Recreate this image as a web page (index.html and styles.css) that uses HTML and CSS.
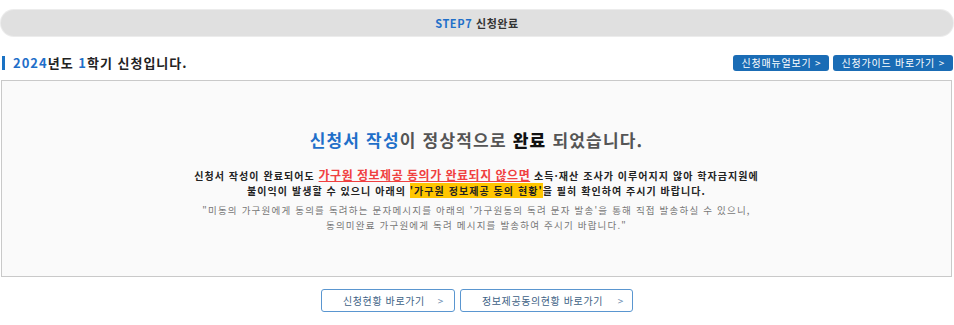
FILE: index.html
```
<!DOCTYPE html>
<html lang="ko">
<head>
  <meta charset="UTF-8" />
  <meta name="viewport" content="width=device-width, initial-scale=1.0">
  <title>신청완료</title>
  <link rel="stylesheet" href="styles.css">
</head>
<body>
  <div class="container">
    <div class="step-bar"><span class="step-no">STEP7</span> 신청완료</div>

    <div class="title-row">
      <h2 class="page-title"><span class="blue">2024</span>년도 <span class="blue">1</span>학기 신청입니다.</h2>
      <div class="top-buttons">
        <button class="blue-button">신청매뉴얼보기 &gt;</button>
        <button class="blue-button">신청가이드 바로가기 &gt;</button>
      </div>
    </div>

    <div class="result-box">
      <h3 class="result-title"><span class="blue">신청서 작성</span>이 정상적으로 <strong>완료</strong> 되었습니다.</h3>
      <p class="notice">
        신청서 작성이 완료되어도 <span class="warn">가구원 정보제공 동의가 완료되지 않으면</span> 소득·재산 조사가 이루어지지 않아 학자금지원에<br>
        불이익이 발생할 수 있으니 아래의 <span class="mark">'가구원 정보제공 동의 현황'</span>을 필히 확인하여 주시기 바랍니다.
      </p>
      <p class="sub-notice">
        "미동의 가구원에게 동의를 독려하는 문자메시지를 아래의 '가구원동의 독려 문자 발송'을 통해 직접 발송하실 수 있으니,<br>
        동의미완료 가구원에게 독려 메시지를 발송하여 주시기 바랍니다."
      </p>
    </div>

    <div class="bottom-buttons">
      <button class="line-button small">신청현황 바로가기 <span class="arrow">&gt;</span></button>
      <button class="line-button large">정보제공동의현황 바로가기 <span class="arrow">&gt;</span></button>
    </div>
  </div>
</body>
</html>
```

FILE: styles.css
```
body {
  margin: 0;
  background: #fff;
  font-family: "Noto Sans CJK KR", "Noto Sans", sans-serif;
  color: #222;
}
.container {
  width: 954px;
  padding-top: 10px;
}
.blue {
  color: #1f6fc9;
}
.step-bar {
  margin: 0 1px 0 1px;
  height: 26px;
  line-height: 26px;
  border-radius: 13px;
  background: #e0e0e0;
  text-align: center;
  font-size: 11px;
  font-weight: bold;
  letter-spacing: 0.6px;
  color: #333;
  box-shadow: 0 0 0 1px #ececec;
}
.step-no {
  color: #1f6fc9;
}
.title-row {
  display: flex;
  justify-content: space-between;
  align-items: center;
  margin-top: 19px;
  height: 16px;
  padding-right: 1px;
}
.page-title {
  margin: 0;
  margin-left: 2px;
  padding-left: 8px;
  border-left: 3px solid #1a72c4;
  font-size: 13px;
  line-height: 14px;
  letter-spacing: 1px;
  color: #222;
}
.top-buttons {
  display: flex;
  gap: 4px;
}
.blue-button {
  height: 16px;
  padding: 0 8px;
  background-color: #1a6cb5;
  color: white;
  border: none;
  border-radius: 3px;
  font-family: inherit;
  font-size: 10px;
  line-height: 16px;
  letter-spacing: 0.8px;
  cursor: pointer;
}
.result-box {
  margin: 9px 2px 0 1px;
  height: 195px;
  background: #fafafa;
  border: 1px solid #c9c9c9;
  text-align: center;
}
.result-title {
  margin: 47px 0 0;
  font-size: 17px;
  line-height: 24px;
  letter-spacing: 1.2px;
  color: #555;
}
.result-title strong {
  color: #111;
}
.notice {
  margin: 15px 0 0;
  font-size: 10px;
  font-weight: bold;
  line-height: 15px;
  letter-spacing: 1.05px;
  color: #222;
}
.warn {
  color: #f04040;
  font-size: 12px;
  text-decoration: underline;
  letter-spacing: 0.5px;
}
.mark {
  background: #ffc600;
}
.sub-notice {
  margin: 5px 0 0;
  font-size: 9.5px;
  line-height: 15px;
  letter-spacing: 1.2px;
  color: #777;
}
.bottom-buttons {
  display: flex;
  justify-content: center;
  gap: 5px;
  margin-top: 12px;
}
.line-button {
  height: 23px;
  display: flex;
  align-items: center;
  justify-content: space-between;
  padding: 0 8px 0 21px;
  background: white;
  border: 1px solid #5a96d0;
  border-radius: 3px;
  font-family: inherit;
  font-size: 10px;
  letter-spacing: 0.6px;
  color: #3d5f85;
  cursor: pointer;
}
.line-button.small {
  width: 134px;
  padding-right: 10px;
}
.line-button.large {
  width: 173px;
}
.arrow {
  color: #6a8cb0;
}
```
